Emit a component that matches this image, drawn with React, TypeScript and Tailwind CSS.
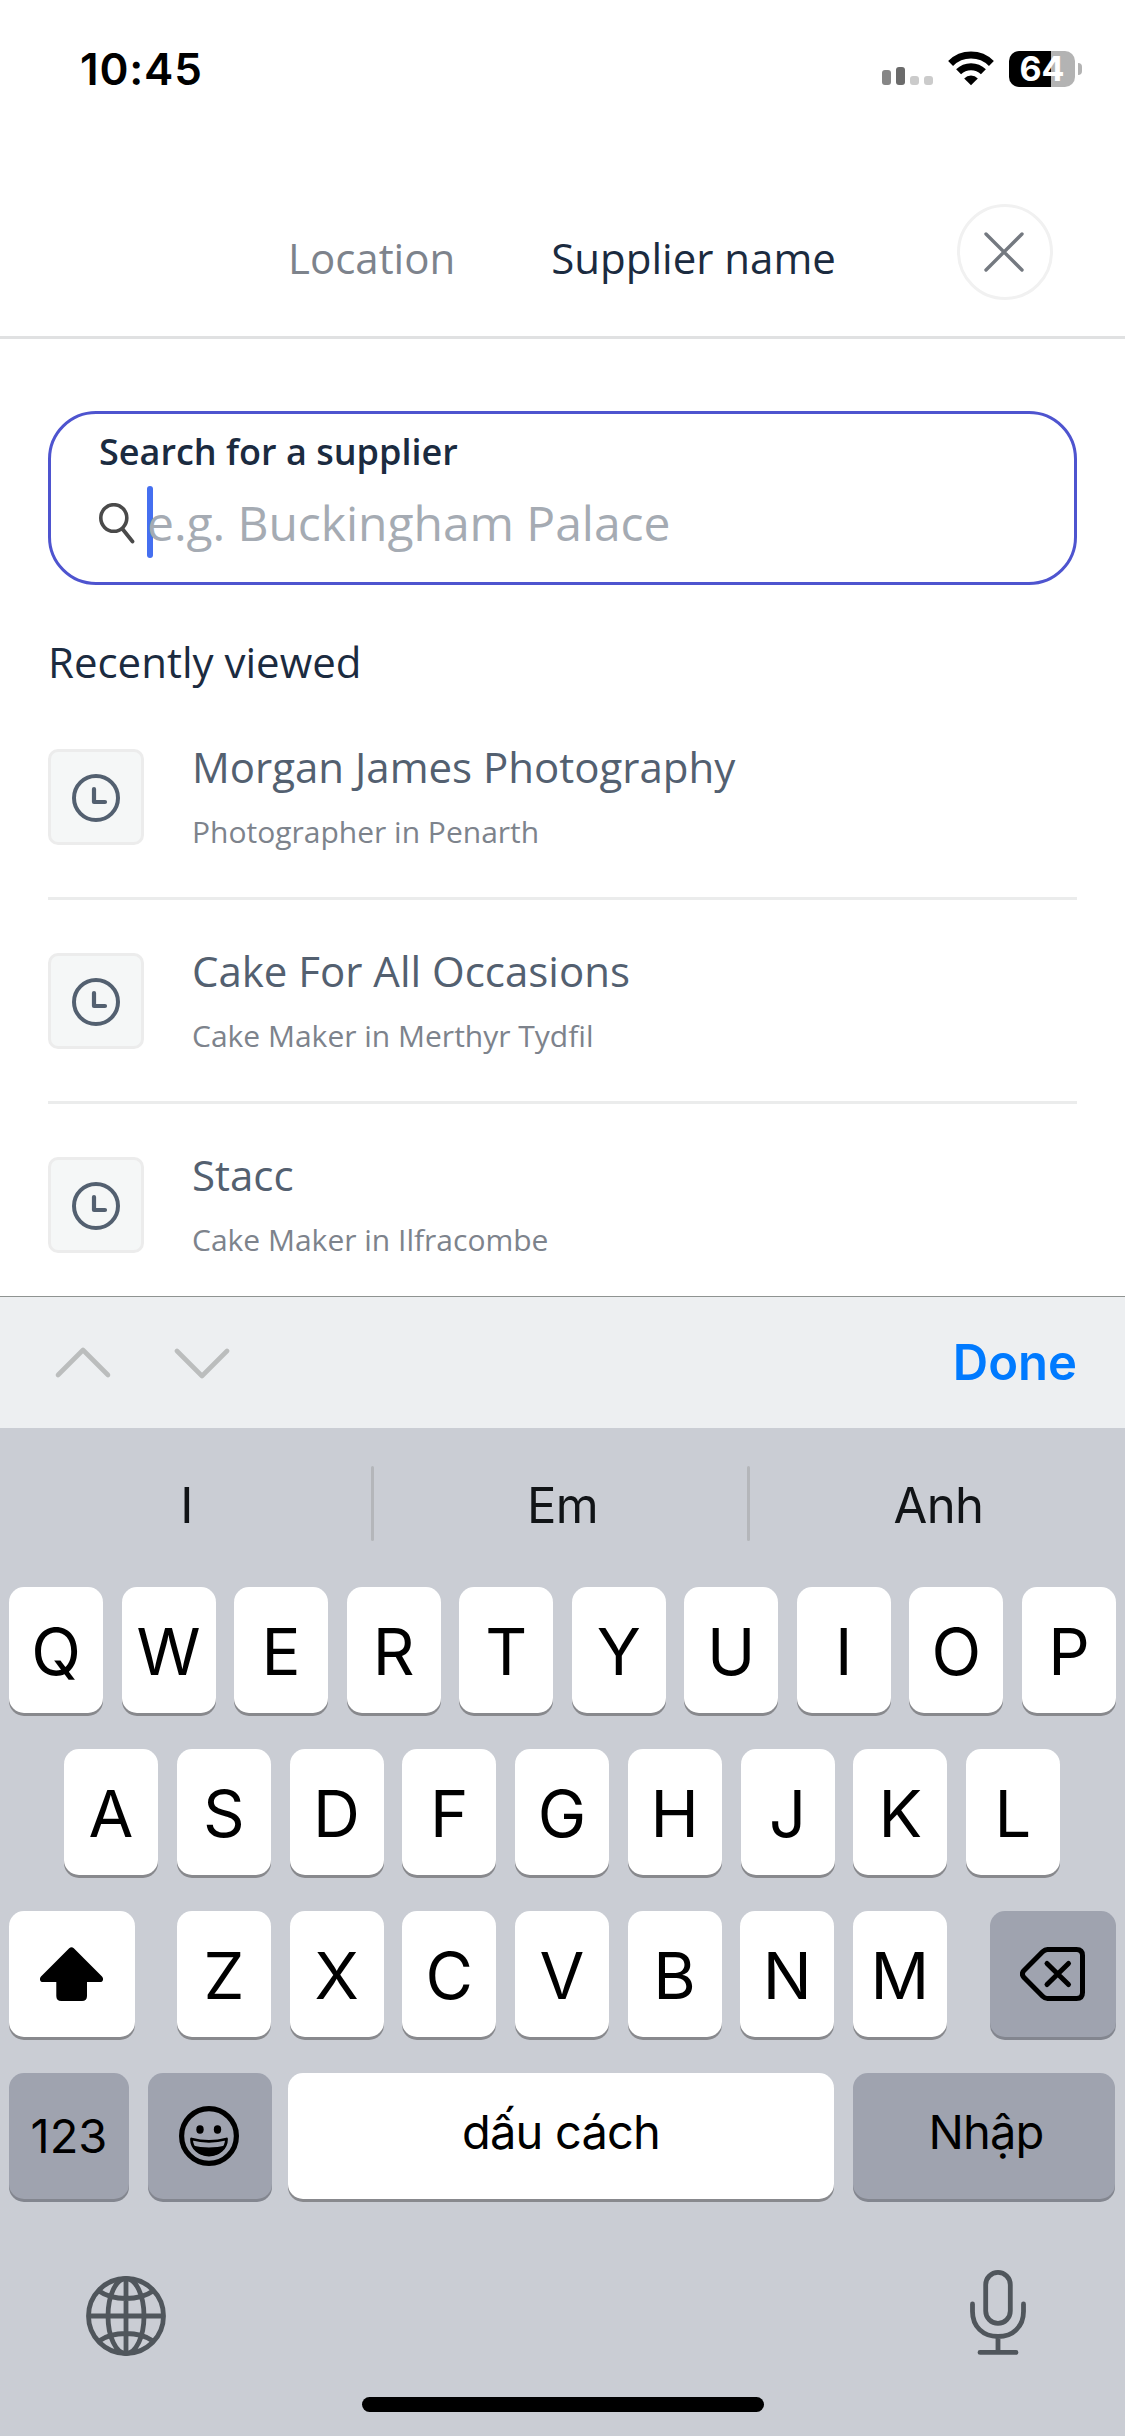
import React, { useState } from "react";

interface Supplier {
  id: number;
  name: string;
  description: string;
}

const suppliers: Supplier[] = [
  { id: 1, name: "Morgan James Photography", description: "Photographer in Penarth" },
  { id: 2, name: "Cake For All Occasions", description: "Cake Maker in Merthyr Tydfil" },
  { id: 3, name: "Stacc", description: "Cake Maker in Ilfracombe" },
];

const suggestions = ["I", "Em", "Anh"];
const topRow = ["Q", "W", "E", "R", "T", "Y", "U", "I", "O", "P"];
const middleRow = ["A", "S", "D", "F", "G", "H", "J", "K", "L"];
const bottomRow = ["Z", "X", "C", "V", "B", "N", "M"];

const StatusBar = () => (
  <div className="flex h-[138px] shrink-0 items-center justify-between pl-[80px] pr-[43px] font-['Inter',sans-serif]">
    <span className="text-[44px] font-semibold leading-none tracking-[0.8px] text-black">10:45</span>
    <div className="flex items-center">
      <svg className="h-[36px] w-[51px]" viewBox="0 0 51 36">
        <rect x="0" y="19" width="9" height="15" rx="3" fill="#868686" />
        <rect x="14" y="16" width="9" height="18" rx="3" fill="#6b6b6b" />
        <rect x="28" y="25" width="9" height="9" rx="3" fill="#cbcbcb" />
        <rect x="42" y="25" width="9" height="9" rx="3" fill="#cbcbcb" />
      </svg>
      <svg className="ml-[15px] h-[36px] w-[46px]" viewBox="0 0 46 36">
        <path d="M23 34.3 16.2 27.4a9.6 9.6 0 0 1 13.6 0Z" fill="#000" />
        <path d="M10.6 20.8a17.6 17.6 0 0 1 24.8 0M2.6 12.4a29 29 0 0 1 40.8 0" fill="none" stroke="#000" strokeWidth="7" />
      </svg>
      <div className="ml-[15px] flex h-[36px] w-[66px] items-center justify-center rounded-[10px] bg-linear-to-r from-black from-64% to-[#b3b3b3] to-64%">
        <span className="text-[34px] font-bold leading-none text-white">64</span>
      </div>
      <div className="ml-[3px] h-[12px] w-[4px] rounded-r-full bg-[#b3b3b3]" />
    </div>
  </div>
);

const ClockIcon = () => (
  <svg className="mt-[1px] h-[48px] w-[48px]" viewBox="0 0 48 48" fill="none" stroke="#536070" strokeLinecap="round" strokeLinejoin="round">
    <circle cx="24" cy="24" r="22" strokeWidth="4" />
    <path d="M22 15v13h11" strokeWidth="4.2" />
  </svg>
);

const SupplierRow = ({ supplier }: { supplier: Supplier }) => (
  <li className="flex h-[204px] items-start border-b-[3px] border-[#ebecec] pt-[53px]">
    <div className="flex h-[96px] w-[96px] items-center justify-center rounded-[10px] border-[3px] border-[#ececec] bg-[#f5f7f7]">
      <ClockIcon />
    </div>
    <div className="-mt-[12px] ml-[48px]">
      <p className="text-[42px] leading-[60px] text-[#536070]">{supplier.name}</p>
      <p className="mt-[14px] text-[30px] leading-[42px] text-[#7d838c]">{supplier.description}</p>
    </div>
  </li>
);

const Key = ({ label }: { label: string }) => (
  <button className="h-[126px] w-[94px] rounded-[15px] bg-white pt-[2px] text-[65px] leading-none text-black shadow-[0_3px_0_#88898d]">
    {label}
  </button>
);

const Keyboard = () => (
  <div className="flex flex-1 flex-col bg-[#cacdd4] font-['Inter',sans-serif]">
    <div className="flex h-[159px] items-center">
      {suggestions.map((word, index) => (
        <React.Fragment key={word}>
          {index > 0 && <div className="-ml-[2px] -mt-[8px] mr-[2px] h-[75px] w-[3px] rounded-full bg-[#b4b6ba]" />}
          <span className="-mt-[4px] flex-1 text-center text-[49px] leading-none tracking-[-0.6px] text-[#111417]">{word}</span>
        </React.Fragment>
      ))}
    </div>

    <div className="flex flex-col gap-[36px]">
      <div className="flex justify-between px-[9px]">
        {topRow.map((label) => (
          <Key key={label} label={label} />
        ))}
      </div>
      <div className="flex justify-between pl-[64px] pr-[65px]">
        {middleRow.map((label) => (
          <Key key={label} label={label} />
        ))}
      </div>
      <div className="flex justify-between px-[9px]">
        <button className="flex h-[126px] w-[126px] items-center justify-center rounded-[15px] bg-white shadow-[0_3px_0_#88898d]">
          <svg className="mr-[2px] h-[54px] w-[63px]" viewBox="0 0 63 54" fill="#000">
            <path d="M29.2 1.2a3.4 3.4 0 0 1 4.6 0L62 29.6c2 2.2 1 5.4-2 5.4H47v14c0 3.3-1.7 5-5 5H21.3c-3.3 0-5-1.7-5-5V35H3c-3 0-4-3.2-2-5.4Z" />
          </svg>
        </button>
        <div className="-ml-[1px] flex w-[770px] justify-between">
          {bottomRow.map((label) => (
            <Key key={label} label={label} />
          ))}
        </div>
        <button className="flex h-[126px] w-[126px] items-center justify-center rounded-[15px] bg-[#9fa3af] shadow-[0_3px_0_#83868f]">
          <svg className="mr-[2px] h-[54px] w-[65px]" viewBox="0 0 65 54" fill="none" stroke="#000" strokeWidth="5" strokeLinecap="round" strokeLinejoin="round">
            <path d="M27.5 2.5H56.5Q62.5 2.5 62.5 8.500V45.500Q62.5 51.500 56.5 51.500H27.5Q25 51.500 22.6 49.200L4 30.600Q.8 27 4 23.400L22.6 4.800Q25 2.500 27.500 2.500Z" />
            <path d="M27 16.500 48.500 37.500M48.500 16.500 27 37.500" />
          </svg>
        </button>
      </div>
      <div className="flex px-[9px] text-[47px] leading-none text-black">
        <button className="h-[126px] w-[120px] rounded-[15px] bg-[#9fa3af] pb-[2px] shadow-[0_3px_0_#83868f]">123</button>
        <button className="ml-[19px] flex h-[126px] w-[124px] items-center justify-center rounded-[15px] bg-[#9fa3af] shadow-[0_3px_0_#83868f]">
          <svg className="mr-[2px] h-[60px] w-[60px]" viewBox="0 0 60 60">
            <circle cx="30" cy="30" r="27.4" fill="none" stroke="#000" strokeWidth="5.2" />
            <ellipse cx="21" cy="23.5" rx="3.7" ry="4.2" />
            <ellipse cx="38.5" cy="23.5" rx="3.7" ry="4.2" />
            <path d="M12.500 33c0 9.500 8 16 17.500 16s17.500-6.500 17.500-16c-11 3-24 3-35 0Z" fill="none" stroke="#000" strokeWidth="2.8" strokeLinejoin="round" />
            <path d="M13.500 39.500c10 2.500 23 2.500 33 0-2.500 6.500-9 10.500-16.500 10.500s-14-4-16.500-10.500Z" />
          </svg>
        </button>
        <button className="ml-[16px] h-[126px] w-[546px] rounded-[15px] bg-white pb-[10px] tracking-[-0.8px] shadow-[0_3px_0_#88898d]">dấu cách</button>
        <button className="ml-[19px] h-[126px] w-[262px] rounded-[15px] bg-[#9fa3af] pb-[10px] pl-[4px] tracking-[-0.8px] shadow-[0_3px_0_#83868f]">Nhập</button>
      </div>
    </div>

    <div className="mt-[70px] flex items-start justify-between pl-[86px] pr-[99px]">
      <svg className="mt-[7px] h-[80px] w-[80px]" viewBox="0 0 80 80" fill="none" stroke="#50565c" strokeWidth="4.8">
        <circle cx="40" cy="40" r="37.5" />
        <ellipse cx="40" cy="40" rx="18" ry="37.5" />
        <path d="M40 2v76M2 40h76M13 15c14 10 40 10 54 0M13 65c14-10 40-10 54 0" />
      </svg>
      <svg className="mt-[1px] h-[85px] w-[56px]" viewBox="0 0 56 85" fill="none" stroke="#50565c" strokeWidth="4.8" strokeLinecap="round">
        <rect x="15.7" y="2.4" width="24.6" height="51" rx="12.3" />
        <path d="M2.5 34v7.500c0 15 10.500 25 25.500 25s25.500-10 25.500-25V34M28 67v15M10 82.400h36" />
      </svg>
    </div>

    <div className="mx-auto mb-[24px] mt-auto h-[15px] w-[402px] rounded-full bg-black" />
  </div>
);

const App = () => {
  const [activeTab, setActiveTab] = useState("supplier");

  return (
    <div className="flex h-[2436px] w-[1125px] flex-col overflow-hidden bg-white font-['Open_Sans',sans-serif]">
      <StatusBar />

      {/* Search tabs */}
      <header className="flex h-[201px] shrink-0 items-start border-b-[3px] border-[#e0e1e2] pl-[288px] pr-[72px] pt-[66px]">
        <div className="flex flex-1 gap-[96px] whitespace-nowrap text-[42px] leading-[107px]">
          <button className={activeTab === "location" ? "text-[#1b2b40]" : "text-[#7d838c]"} onClick={() => setActiveTab("location")}>
            Location
          </button>
          <button className={activeTab === "supplier" ? "text-[#1b2b40]" : "text-[#7d838c]"} onClick={() => setActiveTab("supplier")}>
            Supplier name
          </button>
        </div>
        <button className="flex h-[96px] w-[96px] items-center justify-center rounded-full border-[3px] border-[#f1f1f1]">
          <svg className="mr-[2px] mb-[1px] h-[40px] w-[40px]" viewBox="0 0 40 40" stroke="#747980" strokeWidth="3.4" strokeLinecap="round">
            <path d="M2 2l36 36M38 2 2 38" />
          </svg>
        </button>
      </header>

      <main className="h-[957px] shrink-0 overflow-hidden px-[48px] pt-[72px]">
        <div className="h-[174px] rounded-[48px] border-[3px] border-[#4e54cf] px-[48px] pt-[11px]">
          <p className="text-[36px] font-semibold leading-[54px] text-[#1b2b40]">Search for a supplier</p>
          <div className="mt-[7px] flex h-[72px] items-center">
            <svg className="mt-[3px] h-[41px] w-[36px]" viewBox="0 0 36 41" fill="none" stroke="#4a4a4a" strokeLinecap="round">
              <ellipse cx="14.8" cy="15" rx="13" ry="13.3" strokeWidth="3.6" />
              <path d="M23.5 26 33.500 38.500" strokeWidth="3.8" />
            </svg>
            <div className="ml-[12px] h-[72px] w-[6px] rounded-full bg-[#456ff0]" />
            <span className="-ml-[6px] mt-[2px] text-[48px] leading-[72px] tracking-[-0.04px] text-[#a5abb3]">e.g. Buckingham Palace</span>
          </div>
        </div>

        <h2 className="mt-[47px] text-[42px] leading-[60px] text-[#1b2b40]">Recently viewed</h2>
        <ul className="mt-[4px]">
          {suppliers.map((supplier) => (
            <SupplierRow key={supplier.id} supplier={supplier} />
          ))}
        </ul>
      </main>

      {/* Input accessory bar */}
      <div className="flex h-[132px] shrink-0 items-center justify-between border-t border-[#8f9391] bg-[#edeff1] px-[48px] font-['Inter',sans-serif]">
        <svg className="ml-[6px] h-[34px] w-[176px]" viewBox="0 0 176 34" fill="none" stroke="#bbbdbd" strokeWidth="4.6" strokeLinecap="round" strokeLinejoin="round">
          <path d="M4 29 29 4 54 29" />
          <path d="M123 5 148 30 173 5" />
        </svg>
        <button className="text-[49px] font-semibold leading-none text-[#007aff]">Done</button>
      </div>

      <Keyboard />
    </div>
  );
};

export default App;
